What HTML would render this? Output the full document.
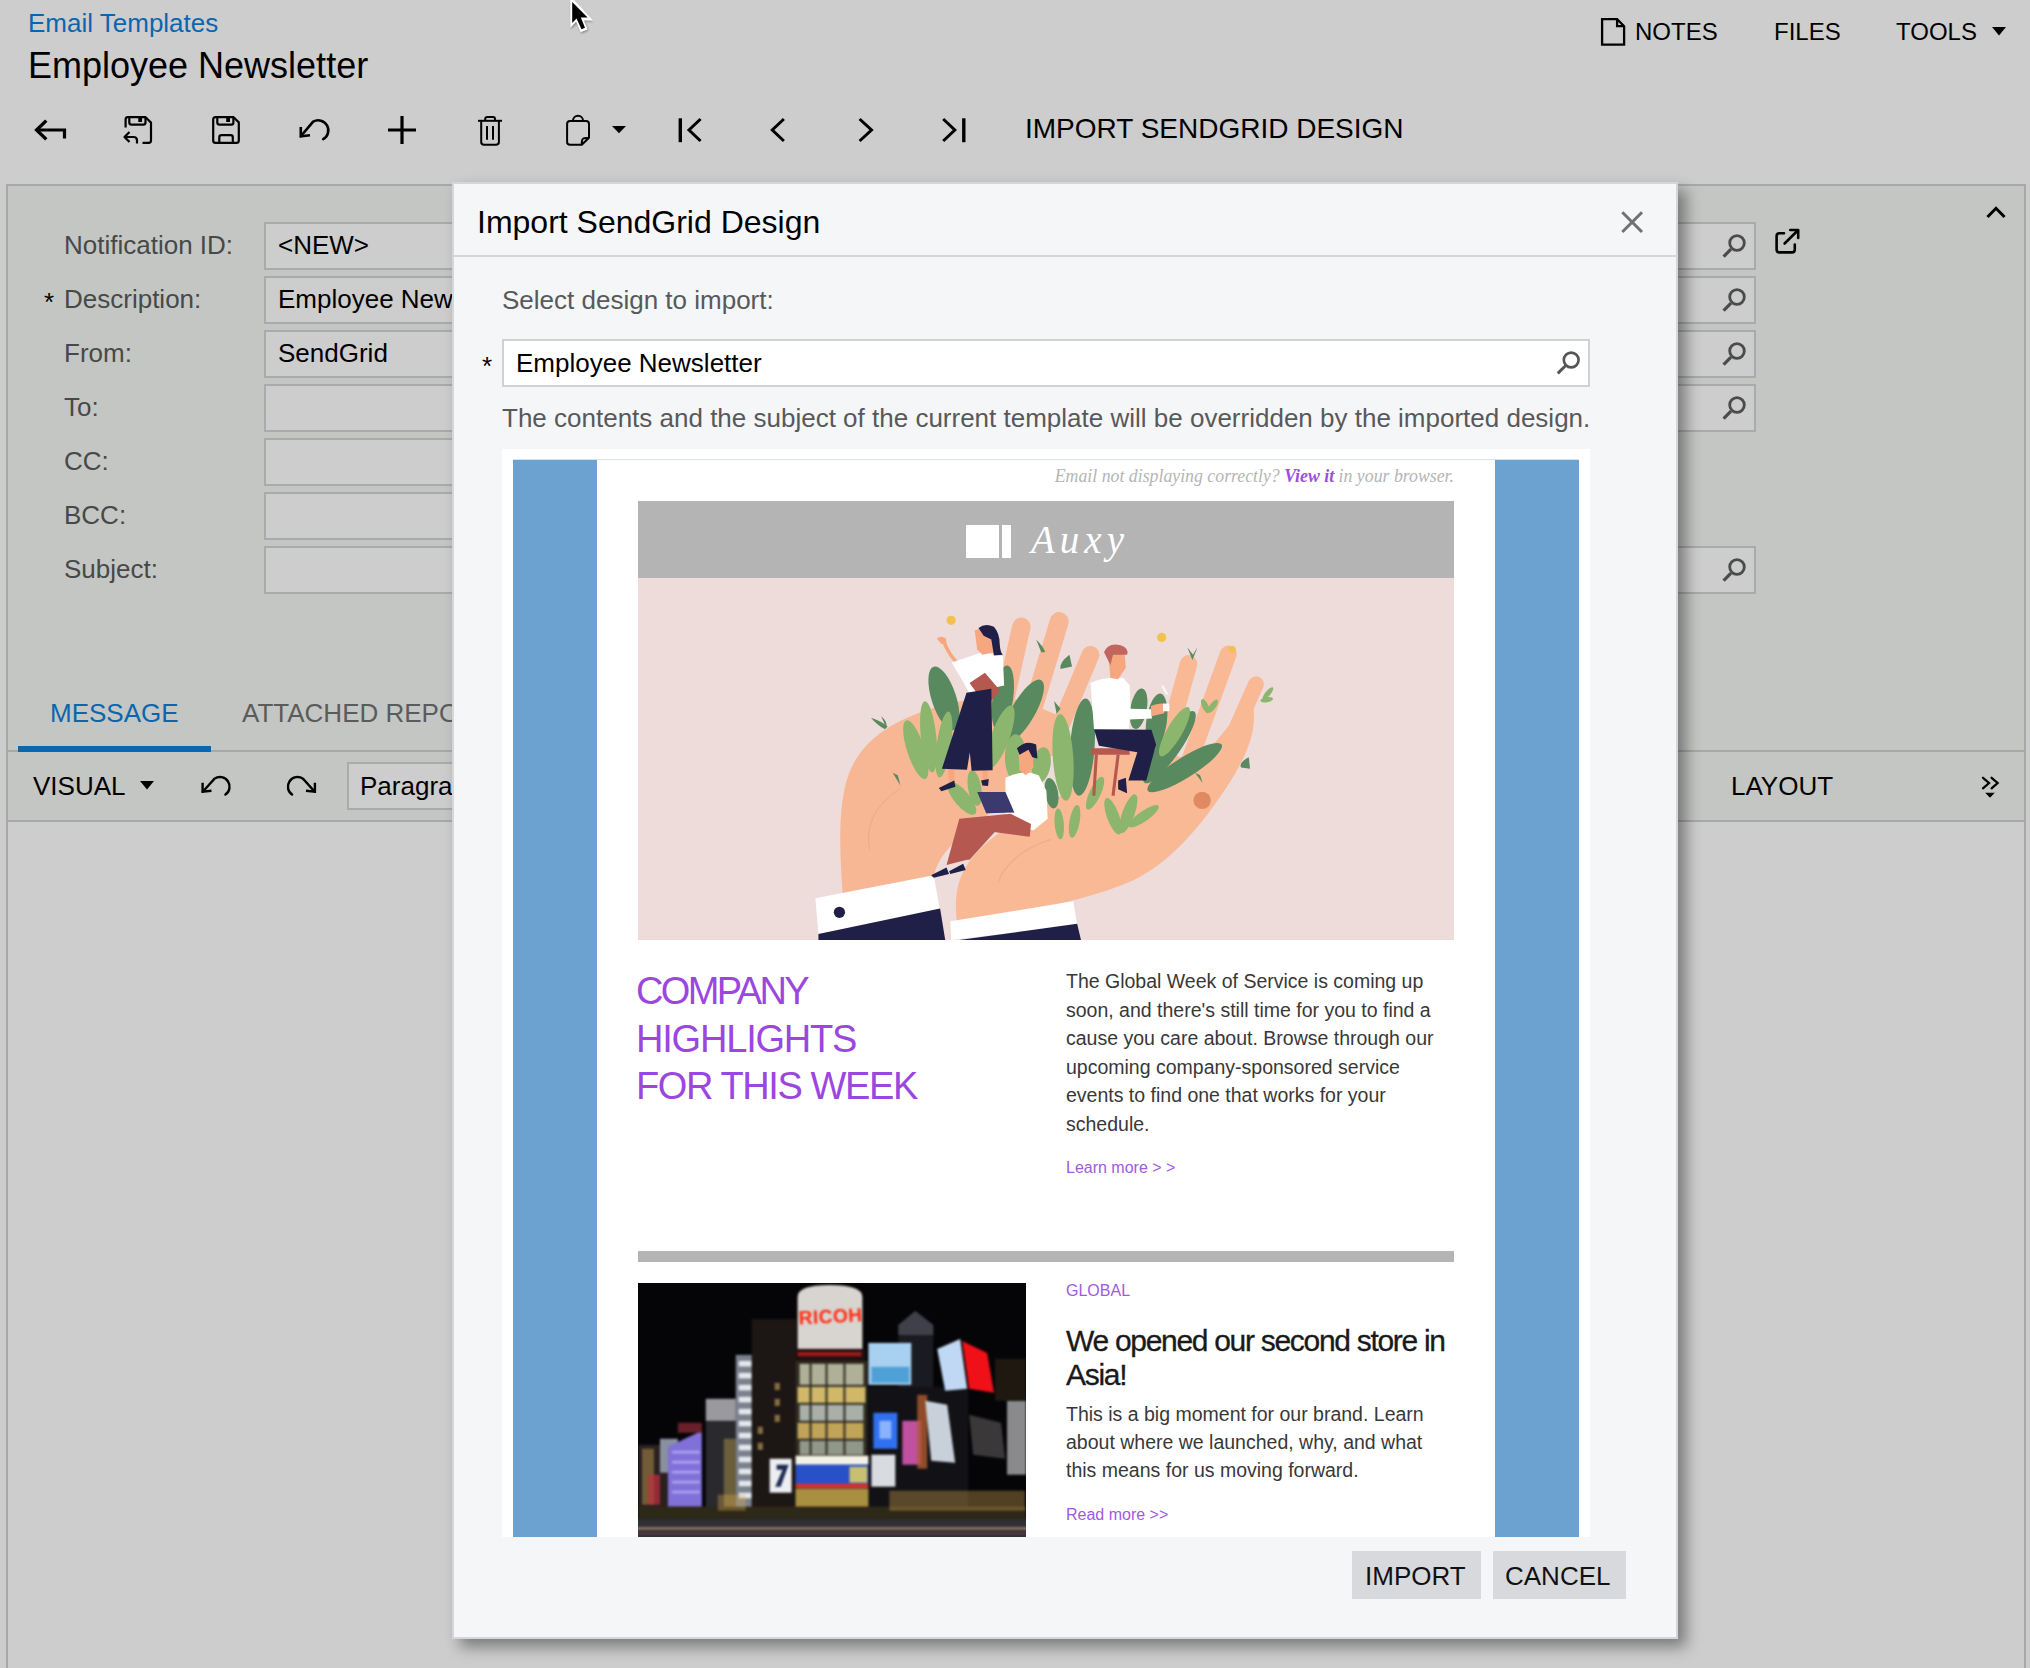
<!DOCTYPE html>
<html><head><meta charset="utf-8">
<style>
*{margin:0;padding:0;box-sizing:border-box}
html,body{width:2030px;height:1668px;overflow:hidden}
body{background:#cdcdcd;font-family:"Liberation Sans",sans-serif;position:relative;color:#000}
.a{position:absolute;white-space:nowrap}
.t26{font-size:26px;line-height:26px}
.t24{font-size:24px;line-height:24px}
.t28{font-size:28px;line-height:28px}
.lbl{color:#474948}
.fld{position:absolute;left:264px;width:1492px;height:48px;border:2px solid #a8aaab;background:#cdcdcd}
.srch{position:absolute}
svg{position:absolute;overflow:visible}
</style></head><body>

<!-- header -->
<div class="a t26" style="left:28px;top:10px;color:#0b66ad">Email Templates</div>
<div class="a" style="left:28px;top:48px;font-size:36px;line-height:36px">Employee Newsletter</div>

<svg style="left:1600px;top:18px" width="27" height="29" viewBox="0 0 27 29"><path d="M2.1 1.2h15l7 7v18.4h-22z M17.1 1.2v7h7" fill="none" stroke="#000" stroke-width="2.3" stroke-linejoin="miter"/></svg>
<div class="a t24" style="left:1635px;top:20px">NOTES</div>
<div class="a t24" style="left:1774px;top:20px">FILES</div>
<div class="a t24" style="left:1896px;top:20px">TOOLS</div>
<svg style="left:1992px;top:27px" width="15" height="9"><path d="M0 0h14l-7 8.5z" fill="#000"/></svg>

<!-- toolbar -->
<svg style="left:0;top:0" width="2030" height="1668" viewBox="0 0 2030 1668">
<g fill="none" stroke="#000" stroke-width="3" stroke-linecap="butt" stroke-linejoin="miter">
<!-- back -->
<path d="M36 130H64.5V138.5" stroke-width="3.2"/>
<path d="M46.3 120.6L36.6 130L46.3 139.4" stroke-linecap="butt" stroke-width="3.4"/>
</g>
<g fill="none" stroke="#000" stroke-width="2.2" stroke-linejoin="round">
<!-- save & close -->
<path d="M125.6 127.5V119.5Q125.6 117.2 128 117.2H145.6L151 122.6V140.5Q151 142.8 148.6 142.8H142.5"/>
<path d="M129.3 117.2V122.5Q129.3 124.7 131.5 124.7H143.3Q145.5 124.7 145.5 122.5V117.2"/>
<path d="M129.5 132L124.5 137L129.5 142" stroke-width="2.2"/>
<path d="M124.5 137H133.5Q137 137 137 140.5V143.5"/>
<!-- save -->
<path d="M215.7 117.2H233.6L238.8 122.4V140.4Q238.8 142.8 236.4 142.8H215.6Q213.2 142.8 213.2 140.4V119.6Q213.2 117.2 215.7 117.2Z"/>
<path d="M217.3 117.2V122.5Q217.3 124.7 219.5 124.7H231.4Q233.4 124.7 233.4 122.5V117.2"/>
<path d="M219.3 142.8V137.4Q219.3 135.2 221.5 135.2H230.6Q232.8 135.2 232.8 137.4V142.8"/>
</g>
<rect x="138.3" y="117" width="3.8" height="5" fill="#000"/>
<rect x="226.2" y="117" width="3.8" height="5" fill="#000"/>
<g fill="none" stroke="#000" stroke-width="2.6">
<!-- undo -->
<path d="M300.8 127V136.3L310 135.3"/>
<path d="M301 136L313.2 121.6A9.7 9.7 0 1 1 323.2 139.2" stroke-linecap="round"/>
</g>
<!-- plus -->
<path d="M402 116V144M388 130H416" stroke="#000" stroke-width="3.2"/>
<g fill="none" stroke="#000" stroke-width="2">
<!-- trash -->
<path d="M478 120.8H502"/>
<path d="M485.2 120.5V119Q485.2 117 487.5 117H493Q495 117 495 119V120.5"/>
<path d="M481.2 121V142Q481.2 144.8 484 144.8H496Q498.9 144.8 498.9 142V121"/>
<path d="M487 126V139.7M493 126V139.7"/>
<!-- clipboard -->
<path d="M573 120.5A5 4.8 0 0 1 583 120.5"/>
<path d="M581.8 144.8H570Q567.1 144.8 567.1 142V124Q567.1 121 570 121H586Q589 121 589 124V137.8L581.8 144.8Q581.5 138.5 584 138.2Q586 137.8 589 137.8" stroke-linejoin="round"/>
</g>
<path d="M612 126H626L619 133.3Z" fill="#000"/>
<g fill="none" stroke="#000" stroke-width="3" stroke-linecap="square">
<!-- nav -->
<path d="M680.3 118.3V142.2" stroke-linecap="butt" stroke-width="3.4"/>
<path d="M699.5 120L689 130L699.5 140"/>
<path d="M782.8 120L772.3 130L782.8 140"/>
<path d="M860.7 120L871.5 130L860.7 140"/>
<path d="M944.3 120L954.8 130L944.3 140"/>
<path d="M963.8 118.3V142.2" stroke-linecap="butt" stroke-width="3.4"/>
</g>
</svg>
<div class="a t28" style="left:1025px;top:115px">IMPORT SENDGRID DESIGN</div>

<!-- form panel -->
<div class="a" style="left:6px;top:184px;width:2020px;height:1500px;border:2px solid #a6a8a9;background:#c4c6c4"></div>
<div class="a" style="left:8px;top:822px;width:2016px;height:900px;background:#cdcdcd"></div>

<div class="a t26 lbl" style="left:64px;top:232px">Notification ID:</div>
<div class="a t26" style="left:44px;top:289px">*</div>
<div class="a t26 lbl" style="left:64px;top:286px">Description:</div>
<div class="a t26 lbl" style="left:64px;top:340px">From:</div>
<div class="a t26 lbl" style="left:64px;top:394px">To:</div>
<div class="a t26 lbl" style="left:64px;top:448px">CC:</div>
<div class="a t26 lbl" style="left:64px;top:502px">BCC:</div>
<div class="a t26 lbl" style="left:64px;top:556px">Subject:</div>

<div class="fld" style="top:222px"></div>
<div class="fld" style="top:276px"></div>
<div class="fld" style="top:330px"></div>
<div class="fld" style="top:384px"></div>
<div class="fld" style="top:438px;width:1000px"></div>
<div class="fld" style="top:492px;width:1000px"></div>
<div class="fld" style="top:546px"></div>
<div class="a t26" style="left:278px;top:232px">&lt;NEW&gt;</div>
<div class="a t26" style="left:278px;top:286px">Employee Newsletter</div>
<div class="a t26" style="left:278px;top:340px">SendGrid</div>

<!-- tabs -->
<div class="a t26" style="left:50px;top:700px;color:#0b66ad">MESSAGE</div>
<div class="a t26" style="left:242px;top:700px;color:#5a5b5b">ATTACHED REPORTS</div>
<div class="a" style="left:8px;top:750px;width:2016px;height:2px;background:#a6a8a9"></div>
<div class="a" style="left:18px;top:746px;width:193px;height:6px;background:#0b66ad"></div>
<div class="a" style="left:8px;top:820px;width:2016px;height:2px;background:#a6a8a9"></div>
<div class="a t26" style="left:33px;top:773px">VISUAL</div>
<svg style="left:140px;top:781px" width="15" height="9"><path d="M0 0h14l-7 8.5z" fill="#000"/></svg>
<div class="a" style="left:347px;top:762px;width:400px;height:48px;border:2px solid #a8aaab;background:#cdcdcd"></div>
<div class="a t26" style="left:360px;top:773px">Paragraph</div>
<div class="a t26" style="left:1731px;top:773px">LAYOUT</div>

<svg style="left:0;top:0" width="2030" height="1668"><g fill="none" stroke="#4a4b4b" stroke-width="2.8"><circle cx="1737" cy="243" r="7.3"/><path d="M1731 249.2L1723.6 256.6" stroke-width="3.2"/><circle cx="1737" cy="297" r="7.3"/><path d="M1731 303.2L1723.6 310.6" stroke-width="3.2"/><circle cx="1737" cy="351" r="7.3"/><path d="M1731 357.2L1723.6 364.6" stroke-width="3.2"/><circle cx="1737" cy="405" r="7.3"/><path d="M1731 411.2L1723.6 418.6" stroke-width="3.2"/><circle cx="1737" cy="567" r="7.3"/><path d="M1731 573.2L1723.6 580.6" stroke-width="3.2"/></g><!-- chevron up -->
<path d="M1988.5 216L1996 208.3L2003.5 216" fill="none" stroke="#000" stroke-width="3" stroke-linecap="square"/>
<!-- external link -->
<g fill="none" stroke="#000" stroke-width="2.6" stroke-linecap="round" stroke-linejoin="round">
<path d="M1784 233.3H1779.5Q1776.6 233.3 1776.6 236.2V249.5Q1776.6 252.4 1779.5 252.4H1792Q1794.8 252.4 1794.8 249.5V244.5"/>
<path d="M1784.6 243.5L1798 230.3M1790.3 230H1798.2V238"/>
</g>
<!-- small undo/redo -->
<g fill="none" stroke="#000" stroke-width="2.4">
<path d="M202.6 782.8V791.6L211.5 790.8"/>
<path d="M203 791.5L214.5 778.7A8.8 8.8 0 1 1 225.4 794.6" stroke-linecap="round"/>
<g transform="translate(517.5 0) scale(-1 1)">
<path d="M202.6 782.8V791.6L211.5 790.8"/>
<path d="M203 791.5L214.5 778.7A8.8 8.8 0 1 1 225.4 794.6" stroke-linecap="round"/>
</g>
</g>
<!-- double chevron -->
<g fill="none" stroke="#000" stroke-width="2.3" stroke-linecap="round">
<path d="M1983 777.8L1989 783L1983 788.3M1991.6 777.8L1997.6 783L1991.6 788.3"/>
</g>
<path d="M1985.2 792.7H1994.8L1990 797.8Z" fill="#000"/>
</svg>
<!-- modal -->
<div id="modal" class="a" style="left:452px;top:182px;width:1226px;height:1457px;background:#f5f6f8;border:2px solid #d3d6da;box-shadow:8px 8px 14px rgba(0,0,0,0.4)">
</div>


<!-- modal content -->
<div class="a" style="left:477px;top:206px;font-size:32px;line-height:32px">Import SendGrid Design</div>
<div class="a" style="left:454px;top:255px;width:1222px;height:2px;background:#d3d6da"></div>
<div class="a t26" style="left:502px;top:287px;color:#58595a">Select design to import:</div>
<div class="a t26" style="left:482px;top:353px">*</div>
<div class="a" style="left:502px;top:339px;width:1088px;height:48px;border:2px solid #cfd1d5;background:#fff"></div>
<div class="a t26" style="left:516px;top:350px">Employee Newsletter</div>
<div class="a t26" style="left:502px;top:405px;color:#58595a">The contents and the subject of the current template will be overridden by the imported design.</div>
<div class="a" style="left:1352px;top:1551px;width:129px;height:48px;background:#d8d9dc"></div>
<div class="a" style="left:1493px;top:1551px;width:133px;height:48px;background:#d8d9dc"></div>
<div class="a t26" style="left:1365px;top:1563px;color:#111">IMPORT</div>
<div class="a t26" style="left:1505px;top:1563px;color:#111">CANCEL</div>
<svg style="left:0;top:0" width="2030" height="1668">
<path d="M1622.3 212.3L1642 232M1642 212.3L1622.3 232" stroke="#6f7173" stroke-width="3" fill="none"/>
<g fill="none" stroke="#555" stroke-width="2.6"><circle cx="1571.2" cy="360" r="7.4"/><path d="M1565.5 365.8L1557.8 373.4" stroke-width="3"/></g>
</svg>

<!-- preview -->
<div id="preview" class="a" style="left:502px;top:449px;width:1088px;height:1088px;background:#fff;overflow:hidden">
</div>
<div class="a" style="left:513px;top:460px;width:84px;height:1077px;background:#6ca2d0"></div>
<div class="a" style="left:1495px;top:460px;width:84px;height:1077px;background:#6ca2d0"></div>
<div class="a" style="left:513px;top:459px;width:1066px;height:1px;background:#d6e4f2"></div>
<div class="a" style="right:576px;top:467px;font-family:'Liberation Serif',serif;font-style:italic;font-size:17.8px;line-height:18px;color:#b5b5b5">Email not displaying correctly? <b style="color:#9a50da">View it</b> in your browser.</div>
<div class="a" style="left:638px;top:501px;width:816px;height:77px;background:#b4b4b4"></div>
<div class="a" style="left:966px;top:525px;width:33px;height:33px;background:#fff"></div>
<div class="a" style="left:1002px;top:525px;width:9px;height:33px;background:#fff"></div>
<div class="a" style="left:1031px;top:520px;font-family:'Liberation Serif',serif;font-style:italic;font-size:39px;line-height:39px;letter-spacing:5px;color:#fff">Auxy</div>
<div id="illus" class="a" style="left:638px;top:578px;width:816px;height:362px;background:#eedcdb;overflow:hidden"><div class="a" style="left:0;top:0;width:816px;height:362px;filter:blur(0.6px)"><svg style="left:142px;top:0" width="520" height="362" viewBox="0 0 2030 1413">
<defs>
<linearGradient id="lf1" x1="0" y1="0" x2="0" y2="1"><stop offset="0" stop-color="#5f9266"/><stop offset="1" stop-color="#477452"/></linearGradient>
</defs>
<!-- left hand palm -->
<path fill="#f7b794" d="M245 1240C232 1060 225 880 270 760C320 640 420 570 560 520C660 485 760 470 860 455L1000 500L1140 560C1000 760 880 880 740 980C650 1050 610 1110 600 1170Z"/>
<!-- left hand fingers -->
<g stroke="#f7b794" stroke-linecap="round" fill="none">
<path d="M860 560L942 190" stroke-width="72"/>
<path d="M960 600L1090 170" stroke-width="74"/>
<path d="M1060 660L1212 300" stroke-width="70"/>
</g>
<!-- right hand palm -->
<path fill="#f9b995" d="M690 1340C680 1240 690 1160 760 1080C850 980 1000 900 1150 820L1220 690L1470 640L1560 700L1700 640L1840 470C1880 600 1800 740 1700 880C1600 1020 1500 1120 1380 1180C1200 1260 960 1300 700 1350Z"/>
<g stroke="#f9b995" stroke-linecap="round" fill="none">
<path d="M1470 790L1595 335" stroke-width="68"/>
<path d="M1560 820L1750 297" stroke-width="66"/>
<path d="M1660 860L1858 415" stroke-width="62"/>
</g>
<!-- palm crease lines -->
<path d="M350 1060C330 960 380 880 470 820" stroke="#e9a07c" stroke-width="4" fill="none" opacity=".6"/>
<path d="M850 1190C880 1110 960 1050 1060 1020" stroke="#e9a07c" stroke-width="4" fill="none" opacity=".6"/>
<circle cx="1648" cy="868" r="34" fill="#df8a61"/>
<!-- cuffs -->
<path fill="#fff" d="M138 1250L600 1160L625 1300L150 1390Z"/>
<path fill="#1f1f47" d="M150 1390L625 1290L645 1413L150 1413Z"/>
<circle cx="232" cy="1305" r="22" fill="#1f1f47"/>
<path fill="#fff" d="M665 1340L1145 1262L1160 1355L668 1413Z"/>
<path fill="#1f1f47" d="M700 1413L1160 1350L1175 1413Z"/>
<!-- back leaves (dark) -->
<g fill="#58895f">
<ellipse cx="640" cy="470" rx="48" ry="130" transform="rotate(-18 640 470)"/>
<ellipse cx="870" cy="470" rx="40" ry="130" transform="rotate(8 870 470)"/>
<ellipse cx="950" cy="520" rx="46" ry="140" transform="rotate(30 950 520)"/>
<ellipse cx="1180" cy="660" rx="48" ry="190" transform="rotate(4 1180 660)"/>
<ellipse cx="1400" cy="510" rx="32" ry="80" transform="rotate(10 1400 510)"/>
<ellipse cx="1470" cy="560" rx="40" ry="110" transform="rotate(8 1470 560)"/>
<ellipse cx="1520" cy="660" rx="42" ry="170" transform="rotate(35 1520 660)"/>
<ellipse cx="1580" cy="740" rx="40" ry="170" transform="rotate(58 1580 740)"/>
<ellipse cx="1060" cy="840" rx="26" ry="60" transform="rotate(-10 1060 840)"/>
</g>
<!-- light leaves -->
<g fill="#8cb56e">
<ellipse cx="530" cy="670" rx="34" ry="120" transform="rotate(-18 530 670)"/>
<ellipse cx="580" cy="620" rx="30" ry="140" transform="rotate(-6 580 620)"/>
<ellipse cx="640" cy="650" rx="28" ry="130" transform="rotate(8 640 650)"/>
<ellipse cx="860" cy="620" rx="36" ry="130" transform="rotate(20 860 620)"/>
<ellipse cx="920" cy="700" rx="42" ry="90" transform="rotate(0 920 700)"/>
<ellipse cx="1020" cy="730" rx="36" ry="70" transform="rotate(10 1020 730)"/>
<ellipse cx="1105" cy="700" rx="40" ry="170" transform="rotate(-4 1105 700)"/>
<ellipse cx="710" cy="860" rx="30" ry="80" transform="rotate(-40 710 860)"/>
<ellipse cx="760" cy="820" rx="26" ry="70" transform="rotate(-10 760 820)"/>
<ellipse cx="1090" cy="960" rx="18" ry="60" transform="rotate(-5 1090 960)"/>
<ellipse cx="1150" cy="950" rx="20" ry="65" transform="rotate(10 1150 950)"/>
<ellipse cx="1230" cy="840" rx="22" ry="70" transform="rotate(25 1230 840)"/>
<ellipse cx="1300" cy="930" rx="24" ry="75" transform="rotate(-20 1300 930)"/>
<ellipse cx="1360" cy="920" rx="24" ry="80" transform="rotate(20 1360 920)"/>
<ellipse cx="1420" cy="930" rx="20" ry="70" transform="rotate(55 1420 930)"/>
<ellipse cx="1540" cy="600" rx="30" ry="110" transform="rotate(30 1540 600)"/>
</g>
<!-- woman standing -->
<g>
<path d="M695 335Q660 300 640 250" stroke="#f7a77f" stroke-width="14" fill="none" stroke-linecap="round"/><path fill="#f7a77f" d="M612 236Q628 222 648 236L650 256L630 258Z"/>
<path fill="#fff" d="M670 330L790 290L870 305L875 420L740 450L700 380Z"/>
<path fill="#f7a77f" d="M760 205Q800 185 830 215L835 290L790 300L770 280Z"/>
<path fill="#1f1f47" d="M775 195Q800 175 835 190Q858 215 858 260Q860 290 870 300L835 302L825 240L795 225Z"/>
<path fill="#b5584f" d="M740 410L800 370L860 440L805 500Z"/>
<path fill="#f7a77f" d="M655 740L680 740L682 800L660 805Z"/><path fill="#f7a77f" d="M790 745L812 745L810 792L792 792Z"/><path fill="#1f1f47" d="M728 448L825 432L830 750L748 752L741 680L730 748L632 745Z"/>
<path fill="#1f1f47" d="M620 820L680 790L685 815L630 832Z"/>
<path fill="#1f1f47" d="M785 790L815 785L812 812L790 810Z"/>
</g>
<!-- man seated with chair -->
<g>
<path fill="#b5584f" d="M1215 665H1365V690H1215Z"/>
<path d="M1235 690L1225 850M1320 690L1300 850" stroke="#b5584f" stroke-width="12"/>
<path fill="#fff" d="M1212 410Q1260 385 1340 390L1365 420L1368 510L1450 512L1452 548L1365 552L1362 588L1226 592Z"/><path fill="#f7a77f" d="M1448 500Q1480 485 1505 492L1500 528L1450 540Z"/><path fill="#fff" d="M1495 490H1520V520H1495Z"/><path d="M1492 420L1512 455" stroke="#fff" stroke-width="8" opacity=".8"/>
<path fill="#f7a77f" d="M1280 290Q1300 270 1345 290L1350 350L1320 395L1290 390Z"/>
<path fill="#c0665d" d="M1265 290Q1280 250 1330 262Q1365 275 1355 300L1300 300L1290 340Z"/>
<path fill="#1f1f47" d="M1226 590L1450 592L1468 650L1430 790L1360 790L1395 680L1245 655Z"/>
<path fill="#1f1f47" d="M1320 790L1350 780L1355 840L1320 825Z"/>

</g>
<!-- man with laptop -->
<g>
<path fill="#fff" d="M880 780Q950 745 1010 770L1040 830L1045 940L990 985L880 960Z"/>
<path fill="#f7a77f" d="M930 665Q960 650 985 670L990 740L960 770L935 750Z"/>
<path fill="#1f1f47" d="M925 665Q960 630 1000 650L1005 705L985 700L970 670L935 690Z"/>
<path fill="#3b3a6e" d="M770 835L880 835L915 915L805 918Z"/>
<path fill="#b5584f" d="M700 940L900 920L980 960L975 1010L820 990L730 1100L650 1120Z"/>
<path fill="#b5584f" d="M760 980L840 990L740 1100L690 1100Z"/>
<path fill="#1f1f47" d="M590 1160L650 1130L660 1155L600 1170Z"/>
<path fill="#1f1f47" d="M660 1145L715 1115L725 1140L665 1155Z"/>
</g>
<!-- small leaves -->
<g fill="#58895f">
<path d="M355 545Q400 560 420 580L410 590Q380 575 355 545Z"/>
<path d="M395 540Q420 560 415 585Z"/>
<path d="M440 760L470 810L460 770Z"/>
<path d="M1000 240Q1030 270 1035 290L1020 290Z"/>
<path d="M1130 300Q1090 330 1095 355L1140 345Z"/>
<path d="M1070 480L1080 530L1095 510Z"/>
<path d="M1590 270L1610 320L1630 270L1612 300Z"/>
<path d="M1830 700Q1790 720 1800 740L1835 745Z"/>


<path d="M1620 760L1650 800L1640 770Z"/>
</g>
<g fill="#8cb56e"><ellipse cx="1660" cy="500" rx="12" ry="30" transform="rotate(-25 1660 500)"/><ellipse cx="1690" cy="500" rx="12" ry="30" transform="rotate(35 1690 500)"/><ellipse cx="1905" cy="450" rx="10" ry="30" transform="rotate(40 1905 450)"/><ellipse cx="1900" cy="475" rx="10" ry="25" transform="rotate(80 1900 475)"/></g>
<!-- stars -->
<g fill="#f2c24e">
<circle cx="668" cy="165" r="18"/>
<circle cx="1490" cy="232" r="18"/>
<circle cx="1765" cy="278" r="14"/>
</g>
</svg></div>
</div>
<div class="a" style="left:636px;top:968px;font-size:38px;line-height:47.5px;letter-spacing:-1px;color:#9c46e0;white-space:normal"><span style="letter-spacing:-2.6px">COMPANY</span><br><span style="letter-spacing:-1.2px">HIGHLIGHTS</span><br><span style="letter-spacing:-1.4px">FOR THIS WEEK</span></div>
<div class="a" style="left:1066px;top:967px;font-size:19.5px;line-height:28.5px;color:#383838">The Global Week of Service is coming up<br>soon, and there's still time for you to find a<br>cause you care about. Browse through our<br>upcoming company-sponsored service<br>events to find one that works for your<br>schedule.</div>
<div class="a" style="left:1066px;top:1160px;font-size:16px;line-height:16px;color:#a05ae0">Learn more &gt; &gt;</div>
<div class="a" style="left:638px;top:1251px;width:816px;height:11px;background:#b4b4b4"></div>
<div id="photo" class="a" style="left:638px;top:1283px;width:388px;height:254px;background:#07070c;overflow:hidden"><div class="a" style="left:0;top:0;width:388px;height:254px;filter:blur(0.9px)">
<svg style="left:0;top:0" width="388" height="254" viewBox="40 40 1945 1272" preserveAspectRatio="none">
<rect x="0" y="0" width="2030" height="1400" fill="#050508"/>
<rect x="40" y="850" width="160" height="330" fill="#2a2020"/>
<rect x="60" y="870" width="60" height="280" fill="#b89850" opacity=".5"/>
<rect x="150" y="820" width="90" height="170" fill="#8a90a0"/>
<rect x="90" y="1000" width="60" height="150" fill="#c03040" opacity=".7"/>
<path d="M190 860L360 780L360 1160L190 1160Z" fill="#8070d8"/>
<g fill="#c8c0ff" opacity=".6"><rect x="210" y="880" width="140" height="14"/><rect x="210" y="930" width="140" height="14"/><rect x="210" y="980" width="140" height="14"/><rect x="210" y="1030" width="140" height="14"/><rect x="210" y="1080" width="140" height="14"/></g>
<rect x="240" y="740" width="120" height="50" fill="#6a2028"/>
<rect x="380" y="620" width="150" height="580" fill="#2a2a2e"/>
<rect x="380" y="620" width="150" height="110" fill="#9a9a9e"/>
<rect x="530" y="400" width="95" height="800" fill="#7a808c"/>
<g fill="#f0f4f8" opacity=".9"><rect x="545" y="430" width="65" height="28"/><rect x="545" y="490" width="65" height="28"/><rect x="545" y="550" width="65" height="28"/><rect x="545" y="610" width="65" height="28"/><rect x="545" y="670" width="65" height="28"/><rect x="545" y="730" width="65" height="28"/><rect x="545" y="790" width="65" height="28"/><rect x="545" y="850" width="65" height="28"/><rect x="545" y="910" width="65" height="28"/><rect x="545" y="970" width="65" height="28"/><rect x="545" y="1030" width="65" height="28"/><rect x="545" y="1090" width="65" height="28"/></g>
<rect x="470" y="820" width="60" height="360" fill="#a08848" opacity=".55"/>
<rect x="610" y="220" width="225" height="980" fill="#1c1614"/>
<g fill="#c8a860" opacity=".6"><rect x="640" y="760" width="26" height="36"/><rect x="640" y="840" width="26" height="36"/><rect x="725" y="540" width="26" height="36"/><rect x="725" y="620" width="26" height="36"/><rect x="725" y="700" width="26" height="36"/></g>
<path d="M840 380V110Q840 50 1000 50Q1165 50 1165 110V380Z" fill="#d8d4d0"/>
<text x="845" y="240" font-family="Liberation Sans" font-weight="bold" font-size="96" fill="#ff2a10" letter-spacing="2" transform="rotate(-3 1000 200)">RICOH</text>
<rect x="830" y="370" width="350" height="60" fill="#201010"/>
<rect x="840" y="385" width="320" height="22" fill="#d02020" opacity=".7"/>
<rect x="830" y="430" width="360" height="750" fill="#302c22"/>
<rect x="850" y="445" width="320" height="105" fill="#b0b098"/>
<rect x="840" y="560" width="340" height="80" fill="#d0b868"/>
<rect x="850" y="650" width="320" height="80" fill="#a8b0a8"/>
<rect x="840" y="740" width="330" height="80" fill="#c0a458"/>
<rect x="850" y="830" width="320" height="70" fill="#909888"/>
<g fill="#302c22"><rect x="900" y="440" width="10" height="460"/><rect x="980" y="440" width="10" height="460"/><rect x="1070" y="440" width="10" height="460"/></g>
<rect x="830" y="905" width="380" height="45" fill="#f4f2e8"/>
<rect x="830" y="950" width="380" height="100" fill="#2850c8"/>
<rect x="1100" y="960" width="90" height="80" fill="#c8c070"/>
<rect x="830" y="1045" width="380" height="22" fill="#d83030"/>
<rect x="830" y="1070" width="380" height="100" fill="#a89040"/>
<rect x="820" y="1160" width="400" height="20" fill="#c83030"/>
<rect x="700" y="920" width="110" height="170" fill="#eceef2"/>
<path d="M735 950H795L755 1060H728L765 975H735Z" fill="#1a2a50"/>
<path d="M1345 250L1430 180L1520 250V1200H1345Z" fill="#1a1a22"/>
<path d="M1345 250L1430 180L1520 250V300H1345Z" fill="#40404a"/>
<rect x="1195" y="560" width="500" height="640" fill="#121216"/>
<rect x="1195" y="340" width="215" height="210" fill="#a8d0f0"/>
<rect x="1210" y="460" width="190" height="80" fill="#50a0d8"/>
<path d="M1540 370L1655 320L1690 570L1580 580Z" fill="#c0d8f4"/>
<path d="M1665 330L1790 390L1825 590L1700 570Z" fill="#f01018"/>
<rect x="1220" y="690" width="120" height="180" fill="#3070f0"/>
<rect x="1250" y="730" width="60" height="90" fill="#b0d0ff" opacity=".7"/>
<rect x="1365" y="730" width="95" height="220" fill="#c050a0"/>
<rect x="1440" y="600" width="50" height="370" fill="#b05a30" opacity=".8"/>
<path d="M1480 630L1590 650L1630 940L1510 930Z" fill="#c8d0da"/>
<path d="M1700 700L1860 740L1880 920L1720 900Z" fill="#3a3838"/>
<rect x="1890" y="630" width="95" height="370" fill="#8a8a8c"/>
<rect x="1830" y="420" width="155" height="210" fill="#1e1810"/>
<rect x="1210" y="900" width="120" height="160" fill="#d8dce0"/>
<rect x="40" y="1160" width="1945" height="60" fill="#2e2818"/>
<g fill="#e0b050" opacity=".35"><rect x="1300" y="1080" width="680" height="100"/><rect x="440" y="1100" width="140" height="80"/></g>
<rect x="0" y="1220" width="2030" height="200" fill="#303034"/>
<rect x="0" y="1262" width="2030" height="14" fill="#c8a080" opacity=".6"/>
<rect x="0" y="1290" width="2030" height="8" fill="#a05050" opacity=".5"/>
</svg></div></div>
<div class="a" style="left:1066px;top:1283px;font-size:16px;line-height:16px;color:#a05ae0">GLOBAL</div>
<div class="a" style="left:1066px;top:1324px;font-size:30px;line-height:33.6px;letter-spacing:-1.3px;color:#1a1a1a;-webkit-text-stroke:0.3px #1a1a1a">We opened our second store in<br>Asia!</div>
<div class="a" style="left:1066px;top:1400px;font-size:19.5px;line-height:28.2px;color:#383838">This is a big moment for our brand. Learn<br>about where we launched, why, and what<br>this means for us moving forward.</div>
<div class="a" style="left:1066px;top:1507px;font-size:16px;line-height:16px;color:#a05ae0">Read more &gt;&gt;</div>


<svg style="left:0;top:0" width="2030" height="1668">
<defs><filter id="cs" x="-50%" y="-50%" width="200%" height="200%"><feGaussianBlur stdDeviation="1.2"/></filter></defs>
<path d="M571 0V29L577 23.5L581.5 33.5L588.5 30.5L584.5 21.5H593Z" fill="#000" opacity=".35" filter="url(#cs)"/>
<path d="M570.3 -4V27.8L576.2 21.8L580.6 32.2L587.6 29.4L584 20.4H593.2Z" fill="#fff"/>
<path d="M572.2 2V23L576.5 18.6L581.5 29.3L585 27.8L580.8 17.6H587.6Z" fill="#000"/>
</svg>
</body></html>
